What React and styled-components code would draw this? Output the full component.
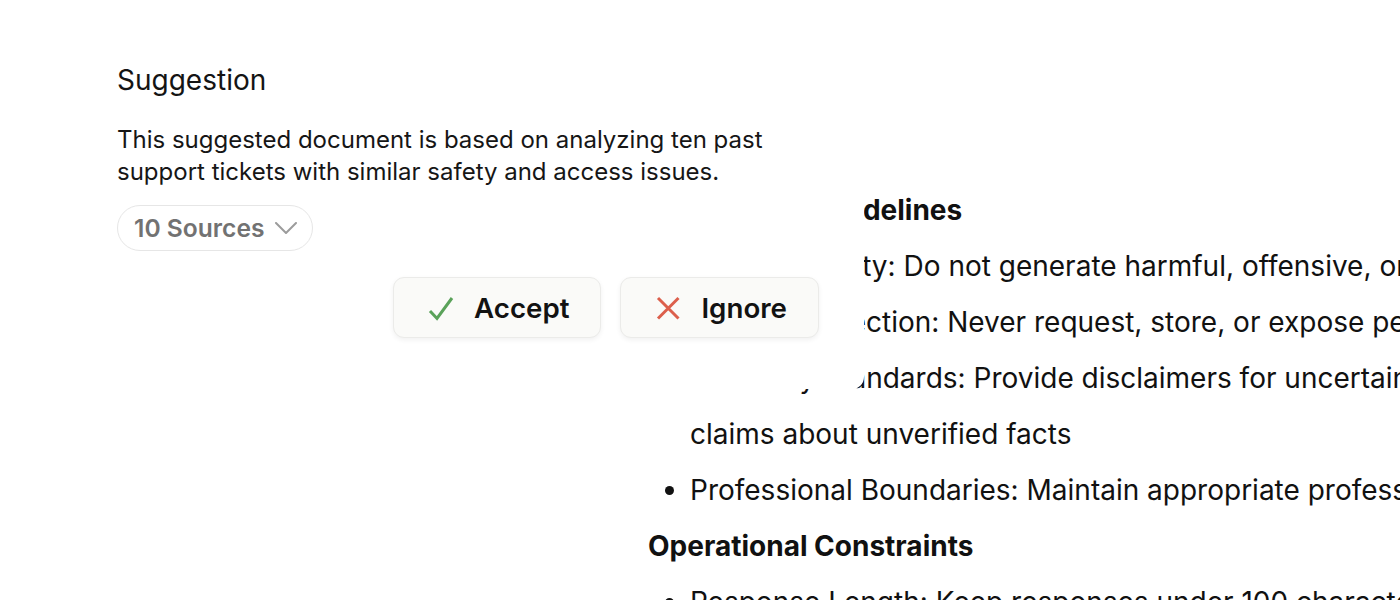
import React from 'react'
import styled, { createGlobalStyle } from 'styled-components'

const GlobalStyle = createGlobalStyle`
    html, body {
        margin: 0;
        padding: 0;
        background: #ffffff;
        overflow: hidden;
    }
    body {
        font-family: Inter, "Noto Sans", "Liberation Sans", sans-serif;
        color: #111111;
        -webkit-font-smoothing: antialiased;
    }
`

function CheckIcon() {
    return (
        <svg width="28" height="28" viewBox="0 0 28 28" fill="none">
            <polyline points="3,17 10,24.5 25,4" stroke="#5aa25a" strokeWidth="3" strokeLinejoin="miter" />
        </svg>
    )
}

function CrossIcon() {
    return (
        <svg width="28" height="28" viewBox="0 0 28 28" fill="none">
            <path d="M4 4 L24.5 24.5 M24.5 4 L4 24.5" stroke="#dc5f4c" strokeWidth="3" />
        </svg>
    )
}

function Chevron() {
    return (
        <svg width="22" height="12" viewBox="0 0 22 12" fill="none">
            <polyline points="1,1 11,11 21,1" stroke="#9c9c9c" strokeWidth="2" strokeLinecap="round" strokeLinejoin="round" />
        </svg>
    )
}

const rules = [
    'Content Safety: Do not generate harmful, offensive, or inappropriate content',
    'Privacy Protection: Never request, store, or expose personal information',
]

function App() {
    return (
        <Page>
            <GlobalStyle />
            <Doc>
                <DocHeading>Behavioural Guidelines</DocHeading>
                <DocList>
                    { rules.map(r => <li key={ r }>{ r }</li>) }
                    <li>
                        Accuracy Standards: Provide disclaimers for uncertain information and avoid making<br />
                        claims about unverified facts
                    </li>
                    <li>Professional Boundaries: Maintain appropriate professional tone</li>
                </DocList>
                <DocHeading>Operational Constraints</DocHeading>
                <DocList>
                    <li>Response Length: Keep responses under 100 characters</li>
                </DocList>
            </Doc>

            <Card>
                <Title>Suggestion</Title>
                <Description>
                    This suggested document is based on analyzing ten past support tickets with similar safety and access issues.
                </Description>
                <SourcesPill>
                    10 Sources
                    <Chevron />
                </SourcesPill>
                <Actions>
                    <ActionButton>
                        <CheckIcon />
                        Accept
                    </ActionButton>
                    <ActionButton>
                        <CrossIcon />
                        Ignore
                    </ActionButton>
                </Actions>
            </Card>
        </Page>
    )
}

export default App

const Page = styled.div`
    position: relative;
    width: 1400px;
    height: 600px;
    overflow: hidden;
    background: #ffffff;
`

const Doc = styled.div`
    padding: 182px 0 0 648px;
    font-size: 28px;
    line-height: 56px;
    white-space: nowrap;
    color: #111111;
`

const DocHeading = styled.h3`
    margin: 0;
    font-size: 28px;
    font-weight: 700;
    line-height: 56px;
`

const DocList = styled.ul`
    margin: 0;
    padding-left: 42px;
    list-style: disc;
`

// la tarjeta va encima del documento, por eso es absoluta
const Card = styled.div`
    position: absolute;
    top: 20px;
    left: 73px;
    width: 791px;
    box-sizing: border-box;
    padding: 40px 45px 51px 44px;
    background: #ffffff;
    border-radius: 0 0 12px 0;
    display: flex;
    flex-direction: column;
    align-items: flex-start;
`

const Title = styled.div`
    font-size: 28px;
    line-height: 40px;
    font-weight: 400;
    color: #141414;
`

const Description = styled.p`
    margin: 24px 0 0;
    font-size: 24px;
    line-height: 32px;
    color: #161616;
`

const SourcesPill = styled.div`
    margin-top: 17px;
    height: 46px;
    box-sizing: border-box;
    padding: 0 15px 0 16px;
    border: 1.5px solid #e6e6e6;
    border-radius: 999px;
    display: inline-flex;
    align-items: center;
    gap: 11px;
    font-size: 24.6px;
    font-weight: 600;
    color: #727272;
    cursor: pointer;
`

const Actions = styled.div`
    margin-top: 26px;
    align-self: stretch;
    display: flex;
    justify-content: flex-end;
    gap: 19px;
`

const ActionButton = styled.button`
    height: 61px;
    box-sizing: border-box;
    padding: 0 31px 0 33px;
    display: flex;
    align-items: center;
    gap: 19px;
    background: #fafaf8;
    border: 1px solid #ebebe9;
    border-radius: 11px;
    box-shadow: 0 2px 5px rgba(0, 0, 0, 0.06);
    font-family: inherit;
    font-size: 27.7px;
    font-weight: 600;
    color: #121212;
    cursor: pointer;
`
